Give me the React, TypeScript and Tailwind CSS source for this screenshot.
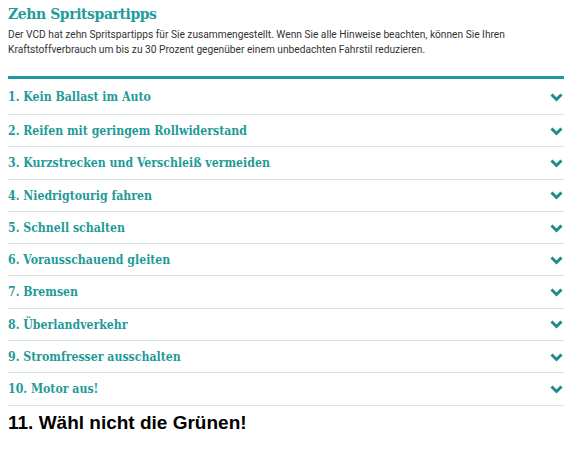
import { useState } from 'react';

const TIPS = [
  '1. Kein Ballast im Auto',
  '2. Reifen mit geringem Rollwiderstand',
  '3. Kurzstrecken und Verschleiß vermeiden',
  '4. Niedrigtourig fahren',
  '5. Schnell schalten',
  '6. Vorausschauend gleiten',
  '7. Bremsen',
  '8. Überlandverkehr',
  '9. Stromfresser ausschalten',
  '10. Motor aus!',
];

function Chevron() {
  return (
    <svg width="13" height="9" viewBox="0 0 13 9" className="shrink-0">
      <path d="M1.5 1.5 L6.5 6.5 L11.5 1.5" fill="none" stroke="#1d8a8c" strokeWidth="3" />
    </svg>
  );
}

export default function App() {
  const [open, setOpen] = useState<number | null>(null);

  return (
    <div className="h-[452px] w-[571px] bg-white px-2 pt-[4px]">
      <h2 className="font-['DejaVu_Serif_Condensed','Liberation_Serif',serif] text-[15.5px] leading-[20px] font-bold tracking-[-0.4px] text-[#1f9c9a]">
        Zehn Spritspartipps
      </h2>
      <p className="mt-[3px] font-['Roboto',sans-serif] text-[10.2px] leading-[15px] text-[#333]">
        Der VCD hat zehn Spritspartipps für Sie zusammengestellt. Wenn Sie alle Hinweise beachten, können Sie Ihren
        Kraftstoffverbrauch um bis zu 30 Prozent gegenüber einem unbedachten Fahrstil reduzieren.
      </p>

      <div className="mt-[19px] mr-[-1px] border-t-[3px] border-[#1c96a0]">
        {TIPS.map((tip, i) => (
          <button
            key={tip}
            onClick={() => setOpen(open === i ? null : i)}
            className={`flex w-full items-center justify-between border-b border-[#d9e2e2] pr-px text-left ${
              i === 0 ? 'h-[36px] pt-[1px]' : 'h-[32.3px] pt-[1px]'
            }`}
          >
            <span className="font-['DejaVu_Serif_Condensed','Liberation_Serif',serif] text-[12.2px] font-bold text-[#1f9a98]">
              {tip}
            </span>
            <Chevron />
          </button>
        ))}
      </div>

      <div className="mt-[5px] font-['Liberation_Sans',Arial,sans-serif] text-[19px] leading-[24px] font-bold text-black">
        11. Wähl nicht die Grünen!
      </div>
    </div>
  );
}
